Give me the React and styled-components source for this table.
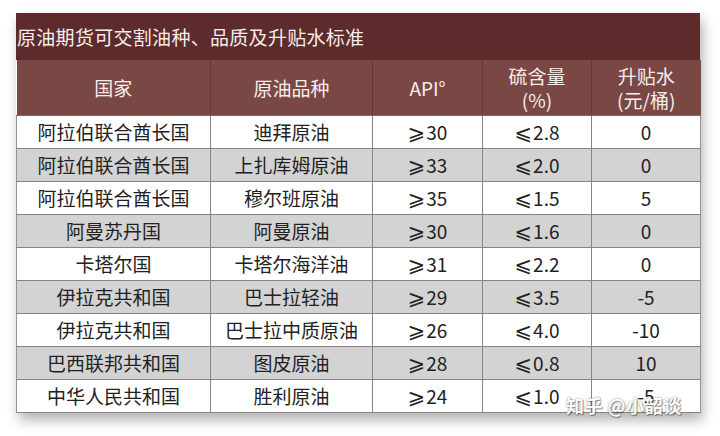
import React from 'react'
import styled, { createGlobalStyle } from 'styled-components'

const GlobalStyle = createGlobalStyle`
  body {
    margin: 0;
    background: #fff;
    font-family: "Noto Sans CJK SC", "Noto Sans", sans-serif;
  }
`

const Page = styled.div`
  position: relative;
  width: 720px;
  height: 436px;
  padding: 13px 20px 0 16px;
  box-sizing: border-box;
  background: #fff;
`

const Sheet = styled.div`
  width: 684px;
  box-shadow: 3px 7px 12px rgba(0, 0, 0, 0.3);
`

const Caption = styled.div`
  height: 47px;
  display: flex;
  align-items: center;
  padding-left: 1px;
  background: #5e2b2c;
  color: #f6eeea;
  font-size: 19px;
  letter-spacing: 0.3px;
`

const Table = styled.table`
  width: 684px;
  border-collapse: collapse;
  table-layout: fixed;
`

const HeadCell = styled.th`
  height: 55px;
  padding: 0;
  background: #7a4844;
  color: #f6eeea;
  font-weight: 400;
  font-size: 19px;
  line-height: 24px;
  text-align: center;
  border-left: 1px solid #673633;
  border-bottom: 1px solid #8a6663;

  &:first-child {
    border-left: none;
  }
`

const Row = styled.tr`
  height: 33px;
  background: ${({ $shade }) => ($shade ? '#d3d3d3' : '#fff')};
`

const Cell = styled.td`
  height: 32px;
  padding: 0;
  text-align: center;
  color: #222;
  font-size: 19px;
  line-height: 32px;
  border: 1px solid #8d8283;
  border-top: none;
  overflow: hidden;

  &:first-child {
    border-left: 1px solid #9a9090;
  }
  &:last-child {
    border-right: 1px solid #9a9090;
  }
`

const Sign = styled.span`
  display: inline-block;
  font-family: "DejaVu Sans", sans-serif;
  font-size: 21px;
  line-height: 20px;
  margin-right: 1px;
`

const Watermark = styled.div`
  position: absolute;
  left: 566px;
  top: 392px;
  color: #fff;
  font-size: 18px;
  font-weight: 700;
  letter-spacing: 0.5px;
  text-shadow: 0 0 2px rgba(0, 0, 0, 0.55), 1px 1px 1px rgba(0, 0, 0, 0.4);
  opacity: 0.9;
`

const widths = [194, 162, 110, 109, 109]

const heads = [
  ['国家'],
  ['原油品种'],
  ['API°'],
  ['硫含量', '(%)'],
  ['升贴水', '(元/桶)'],
]

const rows = [
  ['阿拉伯联合酋长国', '迪拜原油', 30, '2.8', '0'],
  ['阿拉伯联合酋长国', '上扎库姆原油', 33, '2.0', '0'],
  ['阿拉伯联合酋长国', '穆尔班原油', 35, '1.5', '5'],
  ['阿曼苏丹国', '阿曼原油', 30, '1.6', '0'],
  ['卡塔尔国', '卡塔尔海洋油', 31, '2.2', '0'],
  ['伊拉克共和国', '巴士拉轻油', 29, '3.5', '-5'],
  ['伊拉克共和国', '巴士拉中质原油', 26, '4.0', '-10'],
  ['巴西联邦共和国', '图皮原油', 28, '0.8', '10'],
  ['中华人民共和国', '胜利原油', 24, '1.0', '-5'],
]

export default function App() {
  return (
    <Page>
      <GlobalStyle />
      <Sheet>
        <Caption>原油期货可交割油种、品质及升贴水标准</Caption>
        <Table>
          <colgroup>
            {widths.map((w, i) => (
              <col key={i} style={{ width: w }} />
            ))}
          </colgroup>
          <thead>
            <tr>
              {heads.map((lines, i) => (
                <HeadCell key={i}>
                  {lines.map((l, j) => (
                    <div key={j}>{l}</div>
                  ))}
                </HeadCell>
              ))}
            </tr>
          </thead>
          <tbody>
            {rows.map(([country, crude, api, sulfur, diff], i) => (
              <Row key={i} $shade={i % 2 === 1}>
                <Cell>{country}</Cell>
                <Cell>{crude}</Cell>
                <Cell><Sign>⩾</Sign>{api}</Cell>
                <Cell><Sign>⩽</Sign>{sulfur}</Cell>
                <Cell>{diff}</Cell>
              </Row>
            ))}
          </tbody>
        </Table>
      </Sheet>
      <Watermark>知乎 @小韶谈</Watermark>
    </Page>
  )
}
